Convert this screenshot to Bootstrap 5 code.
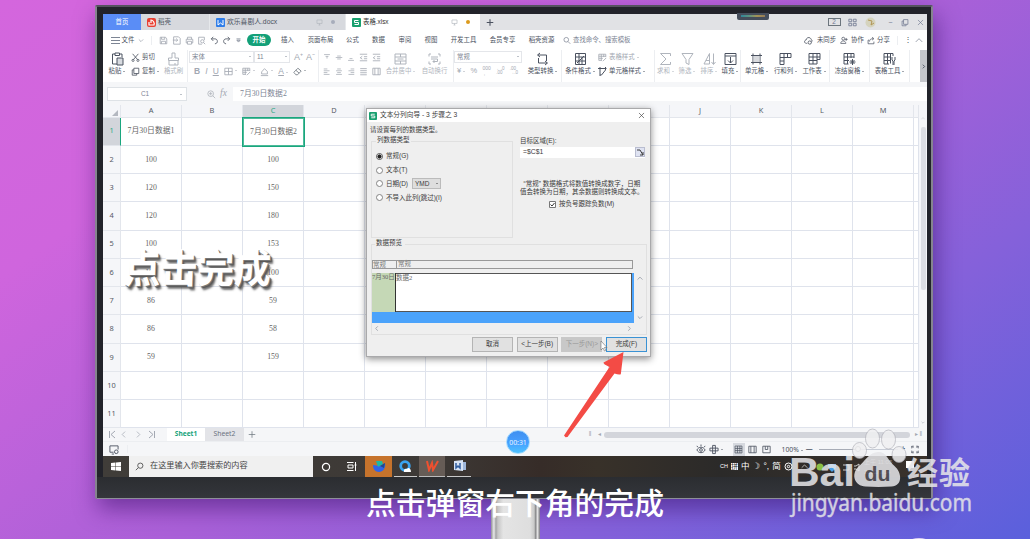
<!DOCTYPE html>
<html lang="zh-CN">
<head>
<meta charset="utf-8">
<meta name="viewport" content="width=device-width, initial-scale=1">
<title>表格.xlsx</title>
<link rel="stylesheet" href="https://cdn.jsdelivr.net/npm/bootstrap@5.3.0/dist/css/bootstrap.min.css">
<style>
html,body{height:539px;overflow:hidden}
body{background:linear-gradient(145deg,#d466dd 0%,#cf65dd 22%,#aa60d8 52%,#8561da 75%,#5a60dc 100%);font-family:"Liberation Sans","Noto Sans CJK SC",sans-serif;font-size:6.4px;line-height:1;color:#4b5260;white-space:nowrap}
svg{display:block;flex:none}
.ic{width:11px;height:11px;fill:none;stroke:currentColor;stroke-width:1}
.monitor{position:absolute;left:95px;top:5px;width:838px;height:494px;background:#22232a;border:2px solid #85848f;border-top-color:#55535f;border-bottom:1px solid #8d8f99;padding:7px 4px 0 6px;border-radius:2px;box-shadow:3px 10px 22px rgba(50,10,100,.5)}
.chin{background:linear-gradient(#2b2d31,#34363b);height:21px;margin:0 -4px 0 -6px}
.screen{height:463px;width:824px;background:#fff;overflow:hidden}
.stand{position:absolute;left:491px;top:499px;width:49px;height:40px;background:linear-gradient(90deg,#8f8f96,#e9e9ea 6%,#a3a3a5 10%,#c6c6c6 14%,#e4e4e4 25%,#dedede 80%,#c9c9c9 88%,#8b8b8d 91%,#e3e3e3 95%,#77757d)}
/* window tabs */
.tabs-row{display:grid;grid-template-columns:38px 69px 136px 134px 1fr auto;height:16px;background:#e1e2e5;align-items:stretch}
.tab{display:flex;align-items:center;padding:0 6px}
.tab .logo{width:9px;height:9px;margin-right:2px}
.tab-gray{background:#d7d9de;border-right:1px solid #e6e8eb}
.tab-on{background:#fff;color:#333}
.dot{width:4px;height:4px;border-radius:50%;background:#a7adbb;margin:0 4px 0 8px}
.wctl{width:101px;display:grid;grid-template-columns:16px 20px 16px 17px 15px 17px;justify-items:center;align-items:center;color:#6e7790}
.notch{position:absolute;left:737px;top:13px;width:32px;height:7px;background:#454d5b;border-radius:0 0 2px 2px;padding:2px 4px}
.notch i{display:block;height:2px;background:linear-gradient(90deg,#2f8ca0,#5c9b84,#b09a54,#9d7f55);opacity:.9}
/* menu */
.menu-row{height:20px;padding-left:7px;display:grid;align-items:center;justify-items:center;
grid-template-columns:10px 16px 9px 12px 13px 13px 12px 13px 12px 13px 11px 30px 27px 39px 25px 27px 26px 26px 39px 39px 39px 12px 72px 1fr 11px 25px 10px 17px 10px 15px 13px 7px 16px}
.pill{background:#13a078;color:#fff;border-radius:6px;width:24px;height:12px;display:flex;align-items:center;justify-content:center;font-weight:700}
.soft{color:#a3a8b2}.mid{color:#7d8594}
.pale{color:#b0b5bd}
/* ribbon */
.ribbon{height:32px;display:grid;grid-template-columns:28px 29px 27px 131px 64px 37px 31px 3px 71px 37px 37px 56px 22px 22px 22px 20px 32px 27px 30px 40px 40px 11px 7px;background:#fff}
.big{display:flex;flex-direction:column;align-items:center;padding-top:2px;gap:2px}
.big .ic{width:13px;height:14px}
.bl{border-left:1px solid #eceef1}
.car::after{content:"";display:inline-block;border:1.4px solid transparent;border-top:1.8px solid currentColor;margin-left:2px;vertical-align:0}
.duo{display:grid;grid-template-rows:14px 14px;align-items:center}
.duo>div{display:flex;align-items:center}
.sel{border:1px solid #e4e6ea;height:12px;display:flex;align-items:center;justify-content:space-between;padding:0 2px}
.strip{display:flex;align-items:center;justify-content:space-between}
.fbar-wrap{background:#f5f6f8;height:23px;padding-top:5px}
.fbar{display:grid;grid-template-columns:4px 80px 20px 12px 14px 1fr;height:14px}
.fbar>div{display:flex;align-items:center}
.song{font-family:"Liberation Serif","Noto Sans CJK SC",serif}
/* sheet */
.sheet{display:grid;grid-template-columns:18px repeat(13,61px) 1fr;grid-template-rows:12.500px repeat(11,28.270px);height:323px;width:816px;overflow:hidden}
.sheet>div{border-right:1px solid #dfe3ec;border-bottom:1px solid #dfe3ec;display:flex;align-items:center;justify-content:center;font-size:7.8px;color:#666;font-family:"Liberation Serif","Noto Sans CJK SC",serif}
.sheet>.hd{background:#f5f6f9;color:#555b66;font-family:"Noto Sans","Noto Sans CJK SC",sans-serif;font-size:7.4px;border-color:#e3e6ec}
.sheet>.hot{background:#d2d5db;color:#27a884}
.sheet>.rowhot{border-right:1px solid #1aa67e}
.sheet>.cur{box-shadow:0 0 0 1px #1aa67e;border:1px solid #4dbb9a;position:relative}
.vsb{width:8px;background:#f5f6f9;display:flex;flex-direction:column;align-items:center}
.vsb i{width:5px;height:163px;background:#dcdee4;border-radius:2px;margin-top:3px}
.sheettabs{height:14px;background:#f5f6f8;display:grid;grid-template-columns:10px 14px 14px 14px 12px 38px 39px 12px 330px 8px 10px 1fr 17px;align-items:center;justify-items:center;border-bottom:1px solid #eceef1}
.status{height:14px;background:#f5f6f8;display:flex;align-items:center}
.task{height:21px;background:linear-gradient(90deg,#403d39,#3d3936 40%,#362c28 53%,#383129 60%,#2b2a29 75%,#3a322c);display:grid;grid-template-columns:26px 184px 26px 26px 27px 27px 26px 28px 1fr;align-items:stretch;color:#fff}
.task>div{display:flex;align-items:center;justify-content:center}
.run{border-bottom:1px solid #c9c9c9;margin:0 2px}
/* wizard dialog */
.wiz{position:absolute;left:366px;top:108px;width:285px;height:249px;background:#efefef;border:1px solid #a9a9ab;box-shadow:0 2px 7px rgba(0,0,0,.45);color:#3c3c3c;font-size:6.5px}
.wiz-h{height:13px;background:#fff;display:flex;align-items:center;padding:0 5px 0 2px;font-size:6.7px}
.grp{border:1px solid #e0e0e0;padding-left:4px}
.grp>b{font-weight:400;background:#efefef;display:inline-block;margin-top:-5px;vertical-align:top;padding:0 1px}
.opts{padding-top:1px}
.opt{display:flex;align-items:center;height:13.8px}
.opt i{width:7px;height:7px;border:1px solid #858585;border-radius:50%;background:#fff;margin-right:3px}
.opt i.on{background:radial-gradient(circle,#222 0 1.8px,#fff 2.3px);border-color:#555}
.ymd{background:#dedede;border:1px solid #bbb;width:29px;height:11px;display:inline-flex;align-items:center;justify-content:space-between;padding:0 2px;margin-left:4px}
.btnx{width:41px;height:15px;border:1px solid #b4b4b4;background:#e1e1e1;display:flex;align-items:center;justify-content:center}
.btnx.off{background:#c8c8c8;color:#999;border-color:#c8c8c8}
.btnx.go{border:1.5px solid #3a92d4}
.prev{display:grid;grid-template-columns:24px 236px 2px;grid-template-rows:39px 11px;background:#4ba3fb;width:262px;color:#666}
.over{position:absolute;left:0;top:0;pointer-events:none}
.timer{position:absolute;left:506px;top:430px;width:24px;height:24px;border-radius:50%;background:linear-gradient(#3e8ff0,#45a0ff 55%,#4ec2ff);border:1px solid #a8dcff;color:#e8f4ff;display:flex;align-items:center;justify-content:center;font:6.9px "Noto Sans",sans-serif}
.shout{position:absolute;left:124px;top:246px;font:700 36.8px/40px "Noto Sans CJK SC",sans-serif;color:#fff;transform:skewX(-2deg) scaleY(1.08);text-shadow:1px 1px 0 #777,2px 2px 1px #555,3px 3px 2px rgba(60,60,60,.7)}
.subs{position:absolute;left:366px;top:484px;font:500 29.8px/34px "Noto Sans CJK SC",sans-serif;color:#fff}
</style>
</head>
<body>
<svg width="0" height="0" class="position-absolute">
<symbol id="paste" viewBox="0 0 13 14"><path d="M4 2H1.500v10H6M9 2h2v3M4 1h4.500v2.500H4z"/><path d="M6 6h6v7H6z" fill="#d8dbe0"/></symbol>
<symbol id="cut" viewBox="0 0 11 11"><path d="M2 1l6 7M9 1L3 8"/><circle cx="2.500" cy="9" r="1.300"/><circle cx="8.500" cy="9" r="1.300"/></symbol>
<symbol id="copy" viewBox="0 0 11 11"><path d="M3.500 1.500h6v6.500h-6zM3.500 3.500h-2v6.500h5.500V8"/></symbol>
<symbol id="brush" viewBox="0 0 13 14"><path d="M5 1h3v5h3.500v2.500h-10V6H5zM2 8.500v4.500h9V8.500M8 13v-2"/></symbol>
<symbol id="save" viewBox="0 0 11 11"><path d="M1.500 1.500h6.500l1.500 2v6h-8zM3 1.500v2.500h4V1.500M3 9.500V6.500h5v3"/></symbol>
<symbol id="doc" viewBox="0 0 11 11"><path d="M2 1h6l2 2v7H2zM1 5h6M5 3l2 2-2 2"/></symbol>
<symbol id="print" viewBox="0 0 11 11"><path d="M3 4V1.500h5V4M3 8.500H1.500v-4.500h8v4.500H8M3 6.500h5v3.500H3z"/></symbol>
<symbol id="view" viewBox="0 0 11 11"><path d="M9 5V1.500H2v8.500h4"/><circle cx="6.500" cy="6.500" r="2"/><path d="M8 8l2 2"/></symbol>
<symbol id="undo" viewBox="0 0 11 11"><path d="M4 1L1.500 3.500 4 6M2 3.500h4c4 0 4 6 0 6"/></symbol>
<symbol id="redo" viewBox="0 0 11 11"><path d="M7 1l2.500 2.500L7 6M9 3.500H5c-4 0-4 6 0 6"/></symbol>
<symbol id="down" viewBox="0 0 11 11"><path d="M1.500 3.500l4 4 4-4"/></symbol>
<symbol id="more" viewBox="0 0 11 11"><path stroke-width="1.800" d="M1 2h9M2 5h7L5.500 9z"/></symbol>
<symbol id="up" viewBox="0 0 11 11"><path d="M1 7.500l4.500-4.500 4.500 4.500"/></symbol>
<symbol id="left" viewBox="0 0 11 11"><path d="M7 1.500l-4 4 4 4"/></symbol>
<symbol id="right" viewBox="0 0 11 11"><path d="M4 1.500l4 4-4 4"/></symbol>
<symbol id="mag" viewBox="0 0 11 11"><circle cx="4.500" cy="4.500" r="3.200"/><path d="M7 7l3 3"/></symbol>
<symbol id="magp" viewBox="0 0 11 11"><circle cx="4.500" cy="4.500" r="3.500"/><path d="M7 7l3 3M2.500 4.500h4M4.500 2.500v4"/></symbol>
<symbol id="scr" viewBox="0 0 11 11"><path d="M1.500 1.500h8v5.500h-8zM5.500 7v2.500M4 9.500h3"/></symbol>
<symbol id="rec" viewBox="0 0 11 11"><path d="M5 8.500H1V1.500h9v4M3 10.500h2.500"/><circle cx="8" cy="8" r="2"/></symbol>
<symbol id="x" viewBox="0 0 11 11"><path d="M1.500 1.500l8 8M9.500 1.500l-8 8"/></symbol>
<symbol id="plus" viewBox="0 0 11 11"><path d="M5.500 1v9M1 5.500h9"/></symbol>
<symbol id="grid4" viewBox="0 0 11 11"><path d="M1 1.500h3.500v3H1zM6.500 1.500H10v3H6.500zM1 6.500h3.500v3H1zM6.500 6.500H10v3H6.500z"/></symbol>
<symbol id="tbl" viewBox="0 0 11 11"><path d="M1 1.500h9v8H1zM1 5.500h9M5.500 1.500v8"/></symbol>
<symbol id="tbs" viewBox="0 0 11 11"><path d="M5 9H1V1.500h8.500V5M1 4h8.500M1 6.500h5M4 1.500V9M7 1.500V5M6 10l4-4"/></symbol>
<symbol id="tblp" viewBox="0 0 13 14"><path d="M1.500 2h10v10h-10zM1.500 5.500h10M1.500 8.500h10M5 2v10M8.500 2v10"/></symbol>
<symbol id="merge" viewBox="0 0 13 14"><path d="M1 2h11v10H1zM1 5h11M6.500 2v3M1 9h11M6.500 9v3M3.500 7h6"/></symbol>
<symbol id="wrap" viewBox="0 0 13 14"><path d="M3 2H1v2.500M10 2h2v2.500M3 12H1V9.500M10 12h2V9.500M3 5h7M3 7h6.500v2.500H5M6.500 8L5 9.500 6.500 11"/></symbol>
<symbol id="conv" viewBox="0 0 13 14"><path d="M4 1L1.500 3 4 5M2 3h8.500v6M9 13l2.500-2L9 9M11 11H2.500V6"/></symbol>
<symbol id="cond" viewBox="0 0 13 14"><path d="M1.500 1.500h10v11h-10zM1.500 5h10M1.500 9h10M5 1.500v11M8 5v7.500M3 11l7-7"/></symbol>
<symbol id="sum" viewBox="0 0 13 14"><path d="M11.500 4V1.500h-10L7 7l-5.500 5.500h10V10"/></symbol>
<symbol id="fun" viewBox="0 0 13 14"><path d="M1 1.500h11L8 7.500v5L5 11V7.500z"/></symbol>
<symbol id="sort" viewBox="0 0 13 14"><path d="M1 12L6.500 1.500V12M3 8.500h3.500M1 12h5.500M10.500 1.500V12M8.500 10l2 2.500 2-2.500"/></symbol>
<symbol id="fill" viewBox="0 0 13 14"><path d="M1 1.500h11v11H1zM1 4h11M6.500 5v6M4 8.500l2.500 2.500L9 8.500"/></symbol>
<symbol id="cell" viewBox="0 0 13 14"><path d="M1 3.500h11M1 10.500h11M3 1.500v11M10 1.500v11"/><path fill="#d8dade" stroke="none" d="M3.500 4h6v6h-6z"/></symbol>
<symbol id="rc" viewBox="0 0 13 14"><path d="M1 1.500h11v4H5v7H1zM1 5.500h4M1 9h4M5 1.500v4M8.500 1.500v4"/></symbol>
<symbol id="ws" viewBox="0 0 13 14"><path d="M1 1.500h11v6H9v4.500H1zM1 5h11M1 8.500h8M5 1.500V12M9 1.500v6"/></symbol>
<symbol id="frz" viewBox="0 0 13 14"><path d="M5.500 12H1V1.500h10V6M1 5h10M1 8.500h5M4.500 1.500V12M8 1.500V6M9.500 7v6M6.500 10h6M7.500 8l4 4M11.500 8l-4 4"/></symbol>
<symbol id="tool" viewBox="0 0 13 14"><path d="M6 12H1V1.500h9V4M1 5h7M1 8.500h7M4.500 1.500V12M7.500 1.500v10M9 5v3l1 1v4M12 5v3l-1 1v4"/></symbol>
<symbol id="va1" viewBox="0 0 11 11"><path d="M1.500 1.500h8M3.500 4h4M5.500 4v3"/></symbol>
<symbol id="va2" viewBox="0 0 11 11"><path d="M1 5.500h9M3 3.500h5M3 7.500h5"/></symbol>
<symbol id="va3" viewBox="0 0 11 11"><path d="M1.500 9.500h8M3.500 7h4"/></symbol>
<symbol id="ind" viewBox="0 0 11 11"><path d="M1 1.500h9M6 4.500h4M6 7h4M1 9.500h9M4 4L1.500 5.800 4 7.500"/></symbol>
<symbol id="al" viewBox="0 0 11 11"><path d="M1 2h5M1 4.500h8M1 7h5M1 9.500h8"/></symbol>
<symbol id="ac" viewBox="0 0 11 11"><path d="M3 2h5M1.500 4.500h8M3 7h5M1.500 9.500h8"/></symbol>
<symbol id="ar" viewBox="0 0 11 11"><path d="M5 2h5M2 4.500h8M5 7h5M2 9.500h8"/></symbol>
<symbol id="aj" viewBox="0 0 11 11"><path d="M1.500 2h8M1.500 4.500h8M1.500 7h8M1.500 9.500h8"/></symbol>
<symbol id="bucket" viewBox="0 0 11 11"><path d="M2 6l3.500-4L9 5.500v3H2zM1 10.500h9"/></symbol>
<symbol id="eraser" viewBox="0 0 11 11"><path d="M1 6.500l5-5 4 3.500-4.500 4.500H3.500zM3.500 4l4 3.500"/></symbol>
<symbol id="cloud" viewBox="0 0 11 11"><path d="M4 9H3C0 9 0 5 2.500 5 3 1 8 1 8.500 4c2 1 1.500 3 .5 3.500"/><circle cx="7" cy="8" r="2"/></symbol>
<symbol id="user" viewBox="0 0 11 11"><circle cx="4.500" cy="3" r="2"/><path d="M1 9.500C1 5 8 5 8 9.500zM8.500 2v4M7 4h3.500"/></symbol>
<symbol id="share" viewBox="0 0 11 11"><path d="M3 5H1.500v5h8V7M3.500 7c0-3 2-4 5-4M7 1l2.500 2L7 5"/></symbol>
<symbol id="eye" viewBox="0 0 11 11"><path d="M1 6c2-4 7-4 9 0-2 4-7 4-9 0zM5.500 2V0M2 3L1 1.500M9 3l1-1.500"/><circle cx="5.500" cy="6" r="1.500"/></symbol>
<symbol id="cross" viewBox="0 0 11 11"><path d="M4 1h3v9H4zM1 4h9v3H1z"/></symbol>
<symbol id="book" viewBox="0 0 11 11"><path d="M1 1.500h9v8H1zM3.500 1.500v8M7.500 1.500v8"/></symbol>
<symbol id="pg" viewBox="0 0 11 11"><path d="M1 1.500h9v8H1zM4 1.500v4h3v-4"/></symbol>
<symbol id="full" viewBox="0 0 11 11"><path d="M1 4V1h3M7 1h3v3M10 7v3H7M4 10H1V7M1 1l2.500 2.500M10 1L7.500 3.500M10 10L7.500 7.500M1 10l2.500-2.500"/></symbol>
</svg>

<main class="monitor">
 <div class="screen d-flex flex-column">
  <nav class="tabs-row">
   <div class="tab justify-content-center text-white" style="background:#5a8df6">首页</div>
   <div class="tab tab-gray"><svg class="logo" viewBox="0 0 9 9"><rect width="9" height="9" rx="2" fill="#e93f32"/><path d="M2 4v3h5c1-2-1-5-3-5v3" fill="none" stroke="#fff" stroke-width="1.200"/></svg>稻壳</div>
   <div class="tab tab-gray"><svg class="logo" viewBox="0 0 9 9"><rect width="9" height="9" rx="1" fill="#2e7de9"/><path d="M2 2v5l2.500-2L7 7V2" fill="none" stroke="#fff"/></svg><span style="font-size:6.800px">欢乐喜剧人.docx</span><svg class="ic ms-auto pale" style="width:7px"><use href="#scr"/></svg><i class="dot"></i></div>
   <div class="tab tab-on"><svg class="logo" viewBox="0 0 9 9"><rect width="9" height="9" rx="1" fill="#18a06f"/><path d="M6.500 2.500h-4v2h4v2h-4" fill="none" stroke="#fff"/></svg>表格.xlsx<svg class="ic ms-auto pale" style="width:7px"><use href="#scr"/></svg><i class="dot" style="background:#dc9a1c"></i></div>
   <div class="d-flex align-items-center ps-1"><svg class="ic" style="width:8px;stroke-width:1.500;margin-left:2px"><use href="#plus"/></svg></div>
   <div class="wctl"><span class="border border-secondary d-flex align-items-center justify-content-center" style="width:13px;height:8px">2</span><svg class="ic" style="width:9px"><use href="#grid4"/></svg><svg width="11" height="11"><circle cx="5.500" cy="5.500" r="5" fill="#d5d3bd"/><path d="M3 3l4 1-1 4 3-2" fill="none" stroke="#b29655"/></svg><span class="ms-2">–</span><svg class="ic ms-1" style="width:8px"><use href="#copy"/></svg><svg class="ic ms-1" style="width:7px"><use href="#x"/></svg></div>
  </nav>
  <nav class="menu-row">
   <svg class="ic mid" style="width:9px"><path d="M0 2.500h9M0 5.500h9M0 8.500h9"/></svg><span>文件</span><svg class="ic mid" style="width:6px"><use href="#down"/></svg><span class="bl" style="height:9px"></span>
   <svg class="ic soft" style="width:9px"><use href="#save"/></svg><svg class="ic soft" style="width:9px"><use href="#doc"/></svg><svg class="ic soft" style="width:9px"><use href="#print"/></svg><svg class="ic soft" style="width:9px"><use href="#view"/></svg><svg class="ic" style="width:9px"><use href="#undo"/></svg><svg class="ic" style="width:9px"><use href="#redo"/></svg><svg class="ic mid" style="width:5px"><use href="#more"/></svg>
   <span class="pill">开始</span><span>插入</span><span>页面布局</span><span>公式</span><span>数据</span><span>审阅</span><span>视图</span><span>开发工具</span><span>会员专享</span><span>稻壳资源</span><svg class="ic mid" style="width:8px"><use href="#mag"/></svg><span class="mid" style="justify-self:start">查找命令、搜索模板</span><span></span>
   <svg class="ic" style="width:9px"><use href="#cloud"/></svg><span>未同步</span><svg class="ic" style="width:8px"><use href="#user"/></svg><span>协作</span><svg class="ic" style="width:8px"><use href="#share"/></svg><span>分享</span><span class="bl" style="height:9px"></span><span style="font-size:8px">⋮</span><svg class="ic mid" style="width:8px"><use href="#up"/></svg>
  </nav>
  <section class="ribbon">
   <div class="big"><svg class="ic"><use href="#paste"/></svg><span class="car">粘贴</span></div>
   <div class="duo"><div><svg class="ic" style="width:9px"><use href="#cut"/></svg><span style="padding-left:2px">剪切</span></div><div><svg class="ic" style="width:9px"><use href="#copy"/></svg><span class="car" style="padding-left:2px">复制</span></div></div>
   <div class="big pale"><svg class="ic"><use href="#brush"/></svg><span>格式刷</span></div>
   <div class="duo bl soft"><div class="ps-0"><span class="sel car mid" style="width:65px;margin-left:1px">宋体</span><span class="sel car mid" style="width:36px">11</span><span style="font-size:9px;margin-left:4px">A⁺</span><span style="font-size:9px;margin-left:3px">A⁻</span></div>
    <div class="strip" style="padding:0 12px 0 6px;font-size:8.500px"><b>B</b><i>I</i><u>U</u><span class="d-flex car align-items-center"><svg class="ic" style="width:9px"><use href="#tbl"/></svg></span><span class="d-flex car align-items-center"><svg class="ic" style="width:9px"><use href="#tbs"/></svg></span><span class="d-flex car align-items-center"><svg class="ic" style="width:9px"><use href="#bucket"/></svg></span><span class="car"><u>A</u></span><span class="d-flex car align-items-center text-secondary"><svg class="ic" style="width:9px"><use href="#eraser"/></svg></span></div></div>
   <div class="duo bl soft"><div class="strip" style="padding:0 1px 0 4px"><svg class="ic" style="width:8px"><use href="#va1"/></svg><svg class="ic" style="width:8px"><use href="#va2"/></svg><svg class="ic" style="width:8px"><use href="#va3"/></svg><svg class="ic" style="width:9px"><use href="#ind"/></svg><svg class="ic" style="width:9px"><use href="#ind"/></svg></div><div class="strip" style="padding:0 1px 0 4px"><svg class="ic" style="width:8px"><use href="#al"/></svg><svg class="ic" style="width:8px"><use href="#ac"/></svg><svg class="ic" style="width:8px"><use href="#ar"/></svg><svg class="ic" style="width:9px"><use href="#aj"/></svg><svg class="ic" style="width:9px"><use href="#book"/></svg></div></div>
   <div class="big pale"><svg class="ic"><use href="#merge"/></svg><span class="car">合并居中</span></div>
   <div class="big pale"><svg class="ic"><use href="#wrap"/></svg><span>自动换行</span></div>
   <div></div>
   <div class="duo bl soft"><div><span class="sel car mid" style="width:68px">常规</span></div><div class="strip" style="padding:0 6px 0 3px;font-size:7.500px"><span class="car">¥</span><span>%</span><span style="font-size:5px">000<br>&nbsp;,</span><span style="font-size:4.500px">←.0<br>.00</span><span style="font-size:4.500px">.00<br>→.0</span></div></div>
   <div class="big"><svg class="ic"><use href="#conv"/></svg><span class="car">类型转换</span></div>
   <div class="big bl"><svg class="ic"><use href="#cond"/></svg><span class="car">条件格式</span></div>
   <div class="duo"><div class="soft"><svg class="ic" style="width:9px"><use href="#tbs"/></svg><span class="car" style="padding-left:2px">表格样式</span></div><div><svg class="ic" style="width:9px"><path d="M2 1v9M0 2.500h8.500M7.500 1v3L3.500 9H2"/></svg><span class="car" style="padding-left:2px">单元格样式</span></div></div>
   <div class="big bl pale"><svg class="ic"><use href="#sum"/></svg><span class="car">求和</span></div>
   <div class="big pale"><svg class="ic"><use href="#fun"/></svg><span class="car">筛选</span></div>
   <div class="big pale"><svg class="ic"><use href="#sort"/></svg><span class="car">排序</span></div>
   <div class="big"><svg class="ic"><use href="#fill"/></svg><span class="car">填充</span></div>
   <div class="big bl"><svg class="ic"><use href="#cell"/></svg><span class="car">单元格</span></div>
   <div class="big"><svg class="ic"><use href="#rc"/></svg><span class="car">行和列</span></div>
   <div class="big"><svg class="ic"><use href="#ws"/></svg><span class="car">工作表</span></div>
   <div class="big bl"><svg class="ic"><use href="#frz"/></svg><span class="car">冻结窗格</span></div>
   <div class="big bl"><svg class="ic"><use href="#tool"/></svg><span class="car">表格工具</span></div>
   <div class="bl"></div>
   <div class="d-flex align-items-center justify-content-center" style="background:#c4c6cb"><svg class="ic" style="width:5px;stroke-width:2"><use href="#right"/></svg></div>
  </section>
  <div class="fbar-wrap"><div class="fbar"><div></div><div class="bg-white border justify-content-between pe-1 mid"><span></span><span class="ps-1">C1</span><span class="car"></span></div><div></div><div class="pale"><svg class="ic" style="width:9px"><use href="#magp"/></svg></div><div class="soft song fst-italic" style="font-size:9.500px;padding-left:1px">fx</div><div class="bg-white song mid" style="font-size:7.800px;padding-left:7px">7月30日数据2</div></div></div>
  <div class="d-flex"><div class="sheet" id="sheet"></div><div class="vsb"><svg class="ic pale mt-2" style="width:4px"><use href="#up"/></svg><i></i><svg class="ic mid mt-auto" style="width:4px"><use href="#down"/></svg></div></div>
  <div class="sheettabs soft"><svg class="ic ms-2" style="width:8px"><path d="M1.500 2v7M7 2L3 5.500 7 9"/></svg><svg class="ic ms-2" style="width:8px"><use href="#left"/></svg><svg class="ic ms-2" style="width:8px"><use href="#right"/></svg><svg class="ic ms-2" style="width:8px"><path d="M6.500 2v7M1 2l4 3.500L1 9"/></svg><span></span><b class="bg-white w-100 h-100 d-flex align-items-center justify-content-center" style="color:#16a37b;font-family:'Noto Sans';font-size:6.600px">Sheet1</b><span class="w-100 h-100 d-flex align-items-center justify-content-center" style="background:#e3e4e8;color:#6b7280;font-family:'Noto Sans';font-size:6.800px">Sheet2</span><svg class="ic text-secondary ms-1" style="width:8px"><use href="#plus"/></svg><span></span><span>‖</span><span>◂</span><span class="w-100 rounded-pill" style="height:6px;background:#d3d5db"></span><span>▸ ‖</span></div>
  <div class="status"><svg class="ic" style="margin-left:6px;width:10px"><use href="#rec"/></svg><span class="bl" style="height:8px;margin-left:8px"></span><span class="ms-auto"></span><svg class="ic" style="width:10px"><use href="#eye"/></svg><svg class="ic" style="width:10px;margin-left:3px"><use href="#cross"/></svg><span class="car" style="margin-right:10px"></span><span class="d-flex justify-content-center align-items-center" style="width:12px;height:13px;background:#d6d9df"><svg class="ic" style="width:9px"><use href="#tblp"/></svg></span><svg class="ic" style="width:9px;margin-left:3px"><use href="#book"/></svg><svg class="ic" style="width:9px;margin-left:5px"><use href="#pg"/></svg><span class="car" style="margin-left:11px;font:6.800px 'Noto Sans'">100%</span><b style="margin:0 7px 0 3px">—</b><span style="width:36px;height:1px;background:#a7acb6"></span><svg width="6" height="6"><circle cx="3" cy="3" r="2.500" fill="#fff" stroke="#999"/></svg><span style="width:37px;height:1px;background:#c7ccd6"></span><b style="margin-left:3px">+</b><svg class="ic" style="width:8px;margin:0 8px 0 6px"><use href="#full"/></svg></div>
  <footer class="task">
   <div><svg width="10" height="9" fill="#fff"><path d="M0 1l4.500-.5V4H0zM5 .5L10 0v4H5zM0 4.500h4.500V8.500L0 8zM5 4.500h5V9l-5-.5z"/></svg></div>
   <div style="background:#f0f0f0;color:#444;justify-content:flex-start;padding-left:6px;font-size:8.150px"><svg class="ic" style="width:9px;margin-right:6px;transform:scaleX(-1)"><use href="#mag"/></svg>在这里输入你要搜索的内容</div>
   <div><svg width="10" height="10"><circle cx="5" cy="5" r="3.600" fill="none" stroke="#fff" stroke-width="1.200"/></svg></div>
   <div><svg class="ic" style="width:10px"><path d="M0 1.500h6.500M0 9.500h6.500M1 4h5v3H1zM8.500 1v9M7.500 4h2"/></svg></div>
   <div style="background:#c6732c"><svg width="14" height="13"><path d="M1 5l7 1 5-3c1 5-2 9-6 9S1 9 1 5z" fill="#3164e8"/><path d="M4 1l6 0 1 3-5 3z" fill="#1db8a5"/><path d="M8 6l5-3-1 5z" fill="#244a8a"/></svg></div>
   <div class="run"><svg width="13" height="13"><circle cx="6" cy="6" r="4.300" fill="none" stroke="#3aa3ef" stroke-width="2.800"/><path d="M5 12c-1-3 2-4 3-3 1-2 4-1 4 3z" fill="#fff"/></svg></div>
   <div style="background:#665c56;border-bottom:1px solid #bbb"><svg width="13" height="12" fill="none" stroke-width="2"><path d="M1 1l2 9 3-7 1 7 5-9" stroke="#ef502f"/></svg></div>
   <div class="run"><svg width="13" height="12"><path d="M1 1l9-1v11L1 10z" fill="#d6e3f5"/><path d="M10 2h3v8h-3" fill="#9eb7db"/><path d="M3 3v5l2-2 2 2V3" stroke="#315e9f" fill="none" stroke-width="1.500"/></svg></div>
   <div style="justify-content:flex-start;padding-left:247px;font-size:8.500px;gap:3px"><span style="font-size:5.500px">CH</span><span class="bg-white text-dark" style="font-size:7px">拼</span><span>中</span><span>☽</span><span>°,</span><span>简</span><svg width="9" height="9" fill="none" stroke="#fff"><circle cx="4.500" cy="4.500" r="3.500" stroke-width="1"/><circle cx="4.500" cy="4.500" r="1.200"/></svg><svg class="ic" style="width:7px;margin-left:5px"><use href="#up"/></svg><svg width="60" height="12" style="margin-left:4px"><circle cx="5" cy="6" r="3.500" fill="#8bbf45"/><path d="M13 3h8v4l-4 4-4-4z" fill="#489ee8"/><path d="M28 4h6v5h-6M39 5h2l3-2v7l-3-2h-2" fill="none" stroke="#ccc"/></svg></div>
  </footer>
 </div>
 <div class="chin"></div>
</main>
<div class="stand"></div>
<div class="notch"><i></i></div>

<section class="wiz">
 <div class="wiz-h"><svg width="8" height="8" viewBox="0 0 9 9" style="margin-right:3px"><rect width="9" height="9" rx="1" fill="#18a06f"/><path d="M6.500 2.500h-4v2h4v2h-4" fill="none" stroke="#fff"/></svg>文本分列向导 - 3 步骤之 3<svg class="ic ms-auto" style="width:7px"><use href="#x"/></svg></div>
 <div style="padding:5px 3px 0;height:19px">请设置每列的数据类型。</div>
 <div class="d-flex" style="padding-left:4px">
  <div class="grp" style="width:142px;height:97px"><b>列数据类型</b>
   <div class="opts"><div class="opt"><i class="on"></i>常规(G)</div><div class="opt"><i></i>文本(T)</div><div class="opt"><i></i>日期(D)<span class="ymd car">YMD</span></div><div class="opt"><i></i>不导入此列(跳过)(I)</div></div></div>
  <div style="width:127px;margin-left:7px;margin-top:-3px">目标区域(E):
   <div class="d-flex bg-white align-items-center justify-content-between" style="height:11px;width:125px;margin-top:2px;padding-left:3px;font-size:6.800px">=$C$1<span class="d-flex align-items-center justify-content-center" style="width:10px;height:10px;background:#dfe3f2;border:1px solid #b9bdd0"><svg class="ic" style="width:7px"><path d="M0 3h3M3 3l3 5M6 5v3H3"/></svg></span></div>
   <div style="margin-top:22px;line-height:8.500px;font-size:6.500px">&nbsp; “常规” 数据格式将数值转换成数字，日期<br>值会转换为日期，其余数据则转换成文本。</div>
   <div class="d-flex align-items-center" style="padding-left:29px;margin-top:4px"><svg width="7" height="7" style="margin-right:3px"><path d="M.5.500h6v6h-6z" fill="#fff" stroke="#777"/><path d="M1.500 3.500l1.500 1.500 2.500-3" fill="none" stroke="#333"/></svg>按负号跟踪负数(M)</div></div>
 </div>
 <div class="grp" style="margin:6px 4px 0;width:276px;height:91px;padding-left:0"><b class="d-block" style="margin-left:3px;width:30px">数据预览</b>
  <div class="d-flex align-items-center song" style="margin-top:13px;border:1px solid #999;width:261px;height:9px;color:#777"><span style="width:24px;border-right:1px solid #999;line-height:7px">常规</span><span style="padding-left:1px">常规</span></div>
  <div class="d-flex" style="margin-top:4px"><div class="prev song"><div style="background:#c5d8b6;border-right:1px solid #333;font-size:6.500px;padding-top:1px;overflow:hidden">7月30日</div><div class="bg-white" style="border:1px solid #555;border-left:0;padding-top:1px;font-size:6.500px">数据2</div><div></div></div>
   <div class="d-flex flex-column justify-content-between align-items-center soft" style="width:12px"><svg class="ic" style="width:6px;stroke-width:1.800"><use href="#up"/></svg><svg class="ic" style="width:6px;stroke-width:1.800"><use href="#down"/></svg></div></div>
  <div class="d-flex justify-content-between soft" style="width:262px;padding:0 2px"><svg class="ic" style="width:6px;stroke-width:1.800"><use href="#left"/></svg><svg class="ic" style="width:6px;stroke-width:1.800"><use href="#right"/></svg></div>
 </div>
 <div class="d-flex justify-content-end" style="gap:3.700px;padding:2px 3px 0 0"><span class="btnx">取消</span><span class="btnx">&lt;上一步(B)</span><span class="btnx off">下一步(N)&gt;</span><span class="btnx go">完成(F)</span></div>
</section>

<div class="timer">00:31</div>
<div class="shout">点击完成</div>
<div class="subs">点击弹窗右下角的完成</div>
<svg class="over" width="1030" height="539">
 <path d="M623.500 352L603.500 362.500Q603 364 609.500 367L564 435.500l1.500 1.800 2-.3 47-63.500q4 1.500 6.300.8z" fill="#f34b45"/>
 <path d="M601 341v9l2-2 1.500 3 1.300-.7-1.400-2.800h2.600z" fill="#fff" stroke="#555" stroke-width=".5"/>
 <ellipse cx="919" cy="543" rx="11" ry="5" fill="#ded3f3"/>
 <g fill="#ddd" opacity=".6" font-family="Liberation Sans,Noto Sans CJK SC" font-size="6"><text x="864" y="464">上午 11:05</text><text x="864" y="474">2022/9/14</text></g>
 <path d="M906 461h8v7h-3l-2 3v-3h-3z" fill="#fff"/>
 <g fill="#e6e6e9" opacity=".86" font-family="Liberation Sans,sans-serif">
  <text x="789" y="485.500" font-size="41" font-weight="700" textLength="66" lengthAdjust="spacingAndGlyphs">Bai</text>
  <g stroke="#a8a8b0" stroke-width=".7" fill="#f0f0f2"><ellipse cx="872.500" cy="438.500" rx="7" ry="9.500"/><ellipse cx="888.500" cy="439.500" rx="7" ry="9.500"/><ellipse cx="859.500" cy="450.500" rx="7" ry="8"/><ellipse cx="899" cy="454.500" rx="7" ry="8"/></g>
  <path d="M878.500 452c8 0 9 8 16 14 8 7 8 20-3 20.500-8 .5-18 .5-26 0-11-.5-15-12-7-20 7-6 11-14.500 20-14.500z"/>
  <text x="864.500" y="481" font-size="20" font-weight="700" fill="#55535a" textLength="26" lengthAdjust="spacingAndGlyphs">du</text>
  <text x="907" y="484" font-size="31" font-weight="700" font-family="Noto Sans CJK SC" textLength="63">经验</text>
  <text x="791" y="511" font-size="24" font-family="Noto Sans,sans-serif" stroke="#e6e6e9" stroke-width=".4" textLength="181" lengthAdjust="spacingAndGlyphs">jingyan.baidu.com</text>
 </g>
</svg>
<script src="https://cdn.jsdelivr.net/npm/bootstrap@5.3.0/dist/js/bootstrap.bundle.min.js"></script>
<script>
const cols = 'ABCDEFGHIJKLM'.split('');
const data = {A:['7月30日数据1',100,120,120,100,100,86,86,59], C:['7月30日数据2',100,150,180,153,100,59,58,159]};
let html = '<div class="hd"><svg width="6" height="6" style="margin:4px -7px 0 0"><path d="M6 0v6H0z" fill="#b4b8c0"/></svg></div>' + cols.map(c => `<div class="hd ${c==='C'?'hot':''}">${c}</div>`).join('') + '<div class="hd"></div>';
for (let r = 1; r <= 11; r++) {
  html += `<div class="hd ${r===1?'hot rowhot':''}">${r}</div>`;
  for (const c of cols) html += `<div class="${r===1&&c==='C'?'cur':''}">${(data[c]&&data[c][r-1])||''}</div>`;
  html += '<div></div>';
}
document.getElementById('sheet').innerHTML = html;
</script>
</body>
</html>
